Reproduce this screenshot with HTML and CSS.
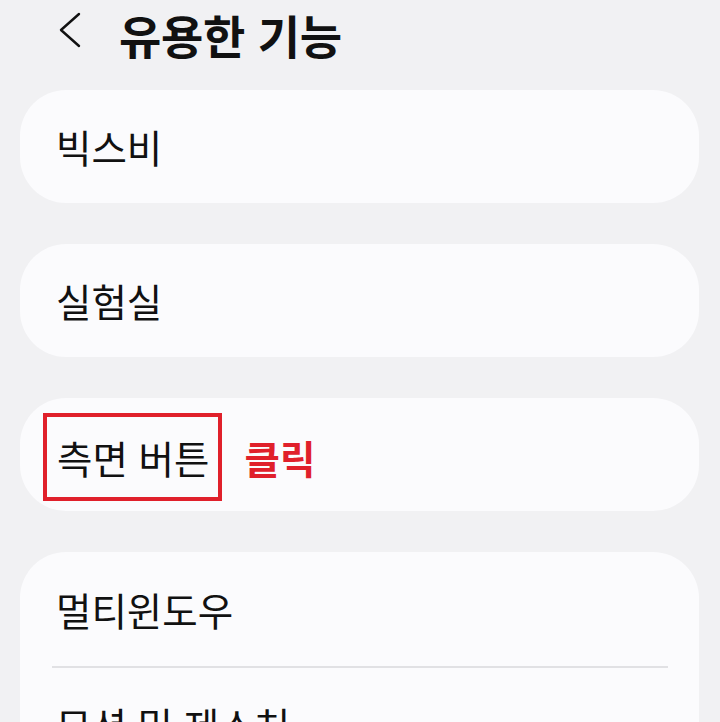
FILE: index.html
```html
<!DOCTYPE html>
<html lang="ko">
<head>
<meta charset="utf-8">
<link rel="stylesheet" href="styles.css">
</head>
<body>
<header class="top">
  <svg class="back" width="24" height="36" viewBox="0 0 24 36"><polyline points="21,2 3,18 21,34" fill="none" stroke="#111" stroke-width="2.4" stroke-linecap="round" stroke-linejoin="round"/></svg>
  <h1 class="title">유용한 기능</h1>
</header>
<main class="list">
  <section class="card"><div class="item">빅스비</div></section>
  <section class="card"><div class="item">실험실</div></section>
  <section class="card"><div class="item"><span class="mark">측면 버튼</span><span class="click">클릭</span></div></section>
  <section class="card">
    <div class="item first">멀티윈도우</div>
    <div class="divider"></div>
    <div class="item">모션 및 제스처</div>
  </section>
</main>
</body>
</html>
```
FILE: styles.css
```css
html, body {
  margin: 0;
  padding: 0;
  background: #f1f1f3;
  font-family: "Noto Sans CJK KR", "Noto Sans", sans-serif;
  color: #111;
  overflow: hidden;
}
.top {
  height: 90px;
  display: flex;
  align-items: flex-start;
  padding-left: 58px;
  box-sizing: border-box;
}
.back {
  margin-top: 12px;
}
.title {
  margin: 0 0 0 37px;
  font-size: 46px;
  font-weight: 700;
  line-height: 68px;
  letter-spacing: -0.3px;
}
.list {
  display: flex;
  flex-direction: column;
  gap: 41px;
  padding: 0 21px 0 20px;
}
.card {
  background: #fbfbfd;
  border-radius: 46px;
  overflow: hidden;
}
.item {
  height: 113px;
  display: flex;
  align-items: center;
  padding-left: 36px;
  font-size: 38.5px;
  line-height: 1;
}
.item.first {
  height: 114px;
}
.mark {
  border: 4px solid #e0202b;
  padding: 21px 9px 21px 10px;
  margin-left: -13px;
  margin-top: 5px;
}
.click {
  color: #e0202b;
  font-weight: 700;
  font-size: 38.5px;
  margin-left: 22px;
  margin-top: 5px;
}
.divider {
  height: 2px;
  background: #e1e1e4;
  margin: 0 31px 0 32px;
}
```
